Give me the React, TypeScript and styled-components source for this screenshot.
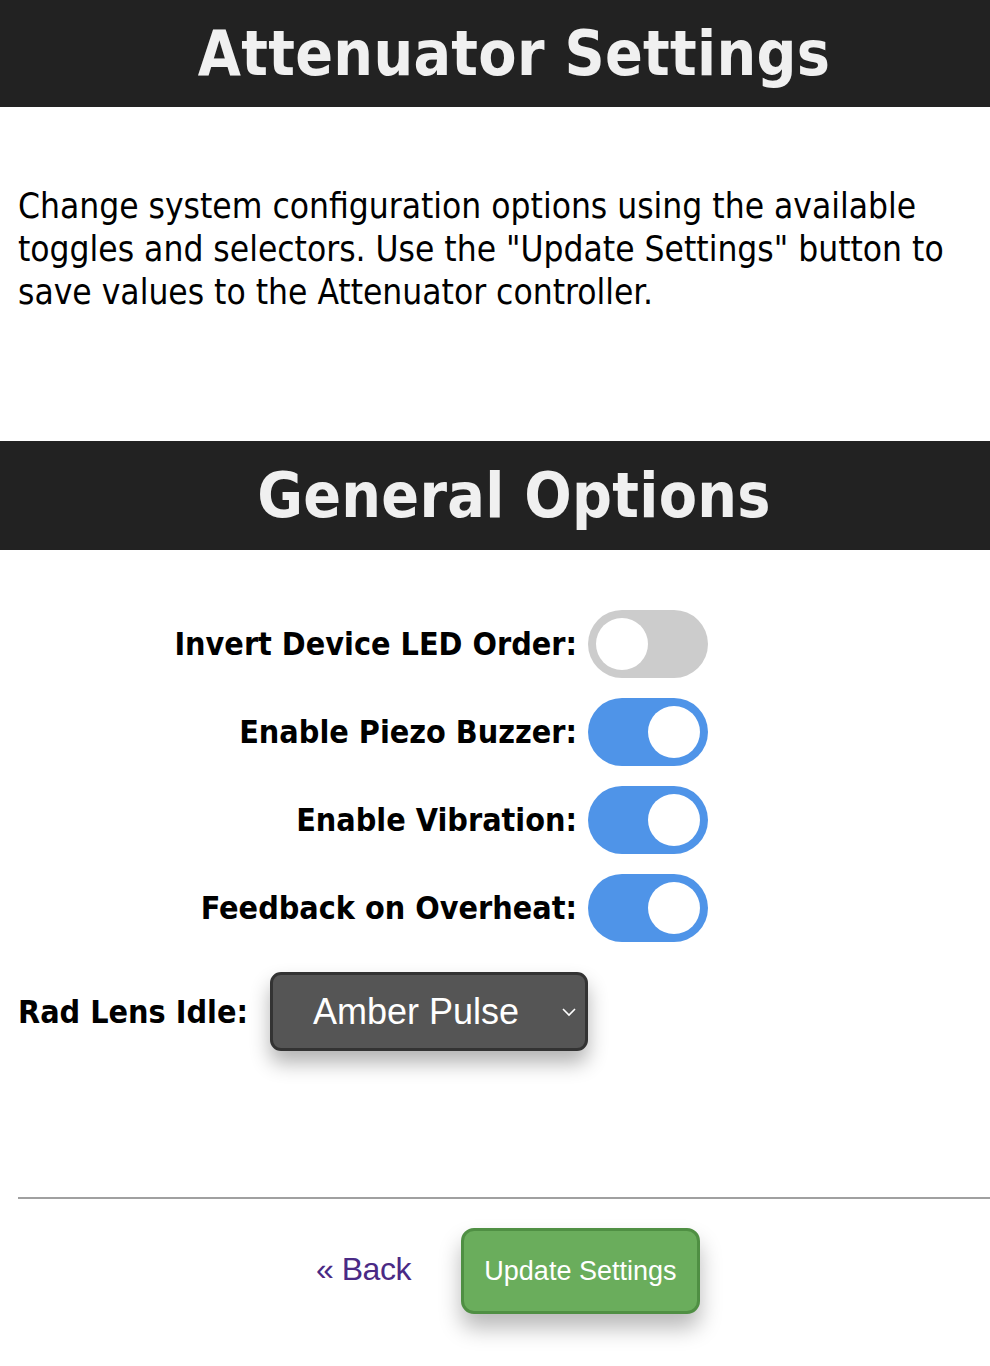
import React from 'react';
import styled, { createGlobalStyle } from 'styled-components';

const GlobalStyle = createGlobalStyle`
  html, body {
    margin: 0;
    padding: 0;
    background: #fff;
  }
  body {
    font-family: 'DejaVu Sans Condensed', 'DejaVu Sans', sans-serif;
    color: #000;
  }
`;

const Page = styled.div`
  width: 990px;
  min-height: 1366px;
  overflow: hidden;
`;

const Banner = styled.h1<{ $tall?: boolean }>`
  margin: 0;
  box-sizing: border-box;
  height: ${(p) => (p.$tall ? '109px' : '107px')};
  padding-left: 38px;
  background: #222;
  color: #f0f0f0;
  font-family: 'DejaVu Sans Condensed', 'DejaVu Sans', sans-serif;
  font-weight: 700;
  font-size: 62px;
  line-height: ${(p) => (p.$tall ? '109px' : '107px')};
  text-align: center;
  letter-spacing: 0.3px;
`;

const Intro = styled.p`
  margin: 0;
  padding: 78px 18px 127px;
  height: 129px;
  box-sizing: content-box;
  font-size: 35px;
  line-height: 43px;
`;

const Options = styled.div`
  display: flex;
  flex-direction: column;
  gap: 20px;
  padding: 60px 0 0;
`;

const ToggleRow = styled.label`
  display: flex;
  align-items: center;
  gap: 11px;
`;

const ToggleLabel = styled.span`
  width: 577px;
  text-align: right;
  font-weight: 700;
  font-size: 32px;
  white-space: nowrap;
`;

const Track = styled.span<{ $on: boolean }>`
  position: relative;
  display: inline-block;
  width: 120px;
  height: 68px;
  border-radius: 34px;
  background: ${(p) => (p.$on ? '#4f94e8' : '#cccccc')};
  flex-shrink: 0;

  &::after {
    content: '';
    position: absolute;
    top: 8px;
    left: ${(p) => (p.$on ? '60px' : '8px')};
    width: 52px;
    height: 52px;
    border-radius: 50%;
    background: #fff;
  }
`;

const SelectRow = styled.div`
  display: flex;
  align-items: center;
  gap: 22px;
  padding: 30px 18px 0;
`;

const SelectLabel = styled.span`
  font-weight: 700;
  font-size: 32px;
  white-space: nowrap;
`;

const SelectBox = styled.div`
  position: relative;
  box-sizing: border-box;
  width: 318px;
  height: 79px;
  border: 3px solid #333;
  border-radius: 11px;
  background: #555;
  color: #fff;
  font-family: 'Liberation Sans', Arial, sans-serif;
  font-size: 36px;
  display: flex;
  align-items: center;
  padding-left: 40px;
  box-shadow: 0 12px 20px rgba(0, 0, 0, 0.3);

  svg {
    position: absolute;
    right: 8px;
    top: 50%;
    transform: translateY(-50%);
  }
`;

const Rule = styled.hr`
  margin: 146px 0 0 18px;
  border: none;
  border-top: 2px solid #a0a0a0;
`;

const Footer = styled.div`
  display: flex;
  align-items: center;
  justify-content: center;
  gap: 50px;
  padding: 29px 0 0 26px;
`;

const BackLink = styled.a`
  color: #4a2a85;
  font-family: 'Liberation Sans', Arial, sans-serif;
  font-size: 32px;
  letter-spacing: -0.5px;
  text-decoration: none;
  margin-top: -4px;
`;

const UpdateButton = styled.button`
  box-sizing: border-box;
  width: 239px;
  height: 86px;
  background: #6aad5c;
  border: 3px solid #4f8f43;
  border-radius: 13px;
  color: #fff;
  font-family: 'Liberation Sans', Arial, sans-serif;
  font-size: 27px;
  box-shadow: 0 14px 22px rgba(0, 0, 0, 0.28);
  cursor: pointer;
`;

const toggles = [
  { label: 'Invert Device LED Order:', on: false },
  { label: 'Enable Piezo Buzzer:', on: true },
  { label: 'Enable Vibration:', on: true },
  { label: 'Feedback on Overheat:', on: true },
];

const App: React.FC = () => {
  return (
    <Page>
      <GlobalStyle />
      <Banner>Attenuator Settings</Banner>
      <Intro>
        Change system configuration options using the available toggles and selectors. Use the
        "Update Settings" button to save values to the Attenuator controller.
      </Intro>
      <Banner $tall>General Options</Banner>
      <Options>
        {toggles.map((t) => (
          <ToggleRow key={t.label}>
            <ToggleLabel>{t.label}</ToggleLabel>
            <Track $on={t.on} />
          </ToggleRow>
        ))}
      </Options>
      <SelectRow>
        <SelectLabel>Rad Lens Idle:</SelectLabel>
        <SelectBox>
          Amber Pulse
          <svg width="16" height="10" viewBox="0 0 16 10">
            <path d="M2 2 L8 8 L14 2" fill="none" stroke="#fff" strokeWidth="1.6" />
          </svg>
        </SelectBox>
      </SelectRow>
      <Rule />
      <Footer>
        <BackLink href="#">« Back</BackLink>
        <UpdateButton>Update Settings</UpdateButton>
      </Footer>
    </Page>
  );
};

export default App;
